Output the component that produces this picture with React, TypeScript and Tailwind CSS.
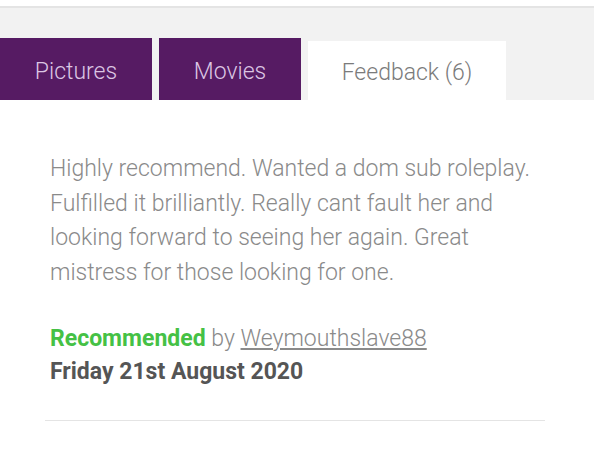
import React from "react";

export default function App() {
  const font = { fontFamily: "Roboto, 'Noto Sans', sans-serif" };
  return (
    <div className="w-[594px] h-[460px] overflow-hidden bg-white" style={font}>
      <div className="h-[8px] bg-white border-b-2 border-[#e4e4e4]" />
      <div className="bg-[#f2f2f2] h-[92px] pt-[30px] flex items-end gap-[7px]">
        <div className="w-[152px] h-[62px] pt-[7px] bg-[#561b63] flex items-center justify-center text-[23px] font-light text-[#dcc6e3] self-start">
          Pictures
        </div>
        <div className="w-[142px] h-[62px] pt-[7px] bg-[#561b63] flex items-center justify-center text-[23px] font-light text-[#dcc6e3] self-start">
          Movies
        </div>
        <div className="w-[198px] h-[59px] mt-[3px] bg-white flex items-start pt-[15px] justify-center text-[23px] font-light text-[#7b7b7b] self-start">
          Feedback (6)
        </div>
      </div>
      <div className="px-[45px] pt-[52px]">
        <div className="pl-[5px]">
          <p className="text-[23px] font-light text-[#8a8a8a] leading-[34.7px]">
            <span className="block">Highly recommend. Wanted a dom sub roleplay.</span>
            <span className="block">Fulfilled it brilliantly. Really cant fault her and</span>
            <span className="block">looking forward to seeing her again. Great</span>
            <span className="block">mistress for those looking for one.</span>
          </p>
          <div className="mt-[31px] text-[23px] leading-[33px]">
            <div>
              <span className="font-bold text-[#45c145]">Recommended</span>{" "}
              <span className="font-light text-[#8a8a8a]">by </span>
              <span className="font-light text-[#8a8a8a] underline underline-offset-2">Weymouthslave88</span>
            </div>
            <div className="font-bold text-[#555555]">Friday 21st August 2020</div>
          </div>
        </div>
        <div className="mt-[32px] h-px bg-[#e4e4e4] w-[500px]" />
      </div>
    </div>
  );
}
